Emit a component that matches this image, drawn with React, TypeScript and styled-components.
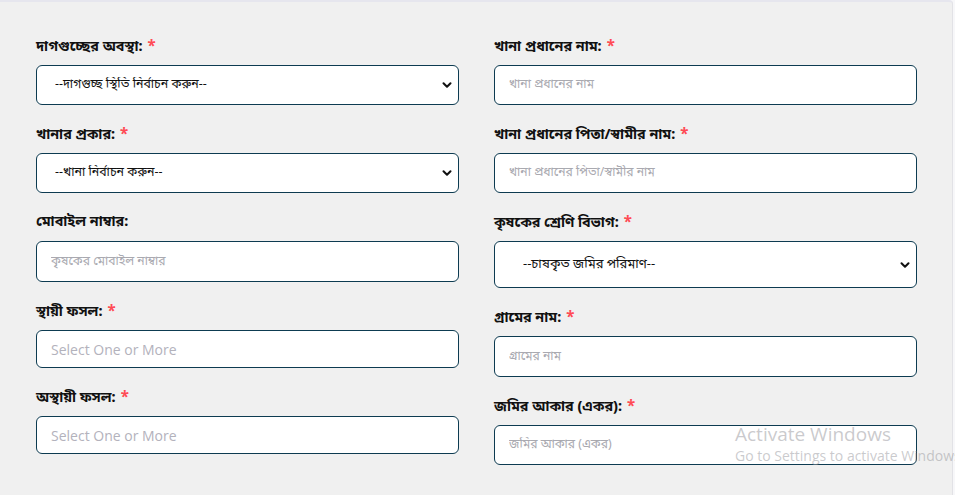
import React from "react";
import styled, { createGlobalStyle } from "styled-components";

const Global = createGlobalStyle`
  html, body { margin: 0; padding: 0; background: #f7f7f9; }
  body { font-family: "Noto Sans Bengali", "Noto Sans", "Open Sans", sans-serif; }
  * { box-sizing: border-box; }
`;

const Card = styled.div`
  width: 953px;
  height: 495px;
  background: #f0f0f0;
  border-top: 2px solid #e6e6ee;
  border-right: 1px solid #e2e2e6;
  border-top-right-radius: 4px;
  padding: 33px 0 0 36px;
  display: grid;
  grid-template-columns: 423px 423px;
  column-gap: 35px;
  align-items: start;
`;

const Column = styled.div`
  display: flex;
  flex-direction: column;
  gap: 18px;
`;

const Field = styled.div`
  display: flex;
  flex-direction: column;
  gap: 10px;
`;

const Label = styled.label`
  height: 20px;
  line-height: 24px;
  font-size: 14.3px;
  font-weight: 700;
  color: #111;
  white-space: nowrap;
`;

const Star = styled.span`
  color: #ff4b55;
  margin-left: 5px;
  font-size: 15px;
`;

const Box = styled.div<{ $h?: number }>`
  position: relative;
  height: ${(p) => p.$h ?? 40}px;
  background: #fff;
  border: 1px solid #0d3b51;
  border-radius: 6px;
  display: flex;
  align-items: center;
`;

const Select = styled.select<{ $pad?: number; $size?: number }>`
  appearance: none;
  -webkit-appearance: none;
  border: none;
  outline: none;
  background: transparent;
  width: 100%;
  height: 100%;
  padding-left: ${(p) => p.$pad ?? 18}px;
  font-family: inherit;
  font-size: ${(p) => p.$size ?? 12.4}px;
  color: #111;
`;

const Chevron = styled.svg`
  position: absolute;
  right: 4px;
  top: 50%;
  transform: translateY(-50%);
  pointer-events: none;
`;

const Input = styled.input<{ $latin?: boolean }>`
  border: none;
  outline: none;
  background: transparent;
  width: 100%;
  height: 100%;
  padding-left: 14px;
  font-family: ${(p) => (p.$latin ? '"Open Sans", sans-serif' : "inherit")};
  font-size: ${(p) => (p.$latin ? 14 : 12.2)}px;
  color: #222;
  &::placeholder {
    color: ${(p) => (p.$latin ? "#b3b2bc" : "#a9a9b0")};
  }
`;

const Watermark = styled.div`
  position: absolute;
  left: 735px;
  top: 422px;
  font-family: "Open Sans", sans-serif;
  color: rgba(150, 150, 155, 0.5);
  white-space: nowrap;
  pointer-events: none;
`;

const WmTitle = styled.div`
  font-size: 19px;
  line-height: 24px;
`;

const WmSub = styled.div`
  font-size: 14px;
  line-height: 20px;
`;

const Down = () => (
  <Chevron width="14" height="14" viewBox="0 0 24 24" fill="none" stroke="#111" strokeWidth="3.5" strokeLinecap="round" strokeLinejoin="round">
    <path d="M6 9l6 6 6-6" />
  </Chevron>
);

const Req = () => <Star>*</Star>;

export default function App() {
  return (
    <>
      <Global />
      <Card>
        <Column>
          <Field>
            <Label>দাগগুচ্ছের অবস্থা:<Req /></Label>
            <Box>
              <Select defaultValue="">
                <option value="">--দাগগুচ্ছ স্থিতি নির্বাচন করুন--</option>
              </Select>
              <Down />
            </Box>
          </Field>
          <Field>
            <Label>খানার প্রকার:<Req /></Label>
            <Box>
              <Select defaultValue="">
                <option value="">--খানা নির্বাচন করুন--</option>
              </Select>
              <Down />
            </Box>
          </Field>
          <Field>
            <Label>মোবাইল নাম্বার:</Label>
            <Box $h={41}>
              <Input placeholder="কৃষকের মোবাইল নাম্বার" />
            </Box>
          </Field>
          <Field>
            <Label>স্থায়ী ফসল:<Req /></Label>
            <Box $h={38}>
              <Input $latin placeholder="Select One or More" />
            </Box>
          </Field>
          <Field>
            <Label>অস্থায়ী ফসল:<Req /></Label>
            <Box $h={38}>
              <Input $latin placeholder="Select One or More" />
            </Box>
          </Field>
        </Column>
        <Column>
          <Field>
            <Label>খানা প্রধানের নাম:<Req /></Label>
            <Box>
              <Input placeholder="খানা প্রধানের নাম" />
            </Box>
          </Field>
          <Field>
            <Label>খানা প্রধানের পিতা/স্বামীর নাম:<Req /></Label>
            <Box>
              <Input placeholder="খানা প্রধানের পিতা/স্বামীর নাম" />
            </Box>
          </Field>
          <Field>
            <Label>কৃষকের শ্রেণি বিভাগ:<Req /></Label>
            <Box $h={47}>
              <Select defaultValue="" $pad={28} $size={13}>
                <option value="">--চাষকৃত জমির পরিমাণ--</option>
              </Select>
              <Down />
            </Box>
          </Field>
          <Field>
            <Label>গ্রামের নাম:<Req /></Label>
            <Box $h={41}>
              <Input placeholder="গ্রামের নাম" />
            </Box>
          </Field>
          <Field>
            <Label>জমির আকার (একর):<Req /></Label>
            <Box>
              <Input placeholder="জমির আকার (একর)" />
            </Box>
          </Field>
        </Column>
      </Card>
      <Watermark>
        <WmTitle>Activate Windows</WmTitle>
        <WmSub>Go to Settings to activate Windows.</WmSub>
      </Watermark>
    </>
  );
}
